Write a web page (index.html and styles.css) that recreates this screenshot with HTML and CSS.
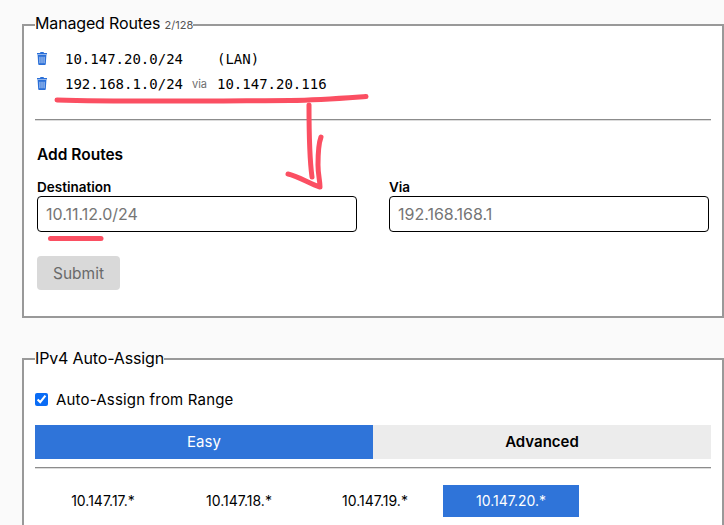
FILE: index.html
```html
<!DOCTYPE html>
<html lang="en">
<head>
<meta charset="utf-8">
<title>Managed Routes</title>
<link rel="stylesheet" href="styles.css">
</head>
<body>
<main class="page">
  <fieldset class="panel panel-routes">
    <legend class="panel-title">Managed Routes <span class="count">2/128</span></legend>
    <div class="routes">
      <svg class="trash" viewBox="0 0 10 13"><path d="M3.500 0h3l.5 1h3v1.400H0V1h3zM.6 3h8.800l-.6 9.100a.9.9 0 0 1-.9.9H2.100a.9.9 0 0 1-.9-.9zm2 1.800v6.400h.7V4.800zm2.050 0v6.400h.7V4.800zm2.050 0v6.400h.7V4.800z"/></svg>
      <span class="addr">10.147.20.0/24</span><span></span><span class="addr">(LAN)</span>
      <svg class="trash" viewBox="0 0 10 13"><path d="M3.500 0h3l.5 1h3v1.400H0V1h3zM.6 3h8.800l-.6 9.100a.9.9 0 0 1-.9.9H2.100a.9.9 0 0 1-.9-.9zm2 1.800v6.400h.7V4.800zm2.050 0v6.400h.7V4.800zm2.050 0v6.400h.7V4.800z"/></svg>
      <span class="addr">192.168.1.0/24</span><span class="via">via</span><span class="addr">10.147.20.116</span>
    </div>
    <hr class="rule">
    <h3 class="add-title">Add Routes</h3>
    <form class="add-form">
      <label class="field"><span class="field-label">Destination</span><input class="field-input" type="text" placeholder="10.11.12.0/24"></label>
      <label class="field"><span class="field-label">Via</span><input class="field-input" type="text" placeholder="192.168.168.1"></label>
    </form>
    <button class="submit" type="button">Submit</button>
  </fieldset>
  <fieldset class="panel panel-assign">
    <legend class="panel-title">IPv4 Auto-Assign</legend>
    <label class="check"><input class="check-box" type="checkbox" checked>Auto-Assign from Range</label>
    <div class="tabs"><div class="tab tab-on">Easy</div><div class="tab">Advanced</div></div>
    <hr class="rule rule-tabs">
    <div class="ranges">
      <div class="range">10.147.17.*</div>
      <div class="range">10.147.18.*</div>
      <div class="range">10.147.19.*</div>
      <div class="range range-on">10.147.20.*</div>
    </div>
  </fieldset>
</main>
<svg class="marks" viewBox="0 0 724 525" width="724" height="525">
  <path class="mark" d="M57 100C120 102 200 101 290 100.500C320 100 345 98 366 96.500"/>
  <path class="mark" d="M309 105C309 130 309 155 312 177"/>
  <path class="mark" d="M321 137C318 145 318 155 318 165C318 175 320 180 320 187C310 184 298 176 288 174"/>
  <path class="mark" d="M50.500 238.500H101"/>
</svg>
</body>
</html>
```
FILE: styles.css
```css
* { box-sizing: border-box; }
html, body { margin: 0; height: 525px; overflow: hidden; }
body { background: #fafafa; color: #000; font-family: Inter, "Liberation Sans", sans-serif; font-size: 16px; position: relative; }
.page { padding: 14px 0 0 22px; width: 724px; height: 525px; overflow: hidden; }
.panel { margin: 0; padding: 12px 11px 0; border: 2px solid #999; background: #fff; min-width: 0; width: 702px; }
.panel-routes { height: 304px; padding-top: 10px; }
.panel-assign { margin-top: 31px; height: 220px; }
.panel-title { padding: 0; font-size: 16px; line-height: 19px; font-weight: 400; letter-spacing: -0.15px; }
.count { font-size: 11px; color: #555; letter-spacing: 0; }
.routes { display: grid; grid-template-columns: 30px 118px 34px 1fr; grid-auto-rows: 25px; align-items: center; margin-top: 1px; }
.trash { width: 10px; height: 13px; margin-left: 2px; fill: #2a6fd8; }
.addr { font-family: "DejaVu Sans Mono", "Liberation Mono", monospace; font-size: 14px; }
.via { font-size: 11px; color: #6e6e6e; padding-left: 9px; }
.rule { margin: 0; border: 0; border-top: 1px solid #8c8c8c; box-shadow: 0 1px 0 #dcdcdc; }
.routes + .rule { margin-top: 23px; }
.add-title { margin: 26px 0 0 2px; font-size: 15.500px; line-height: 18px; font-weight: 600; }
.add-form { display: grid; grid-template-columns: 320px 320px; gap: 32px; margin: 15px 2px 0; }
.field { display: block; }
.field-label { display: block; font-size: 13.500px; line-height: 16px; font-weight: 600; margin-bottom: 1px; }
.field-input { display: block; width: 100%; height: 36px; padding: 0 8px; border: 1px solid #000; border-radius: 4px; background: #fff; font: 400 16px Inter, "Liberation Sans", sans-serif; }
.field-input::placeholder { color: #757575; opacity: 1; }
.submit { display: block; margin: 24px 0 0 2px; width: 83px; height: 34px; border: 0; border-radius: 4px; background: #d9d9d9; color: #6a6a6a; font: 400 15.500px Inter, "Liberation Sans", sans-serif; }
.check { display: flex; align-items: center; margin-top: 9px; height: 20px; font-size: 15px; letter-spacing: 0.18px; }
.check-box { width: 13px; height: 13px; margin: 0 8px 0 0; accent-color: #0a6cf5; }
.tabs { display: grid; grid-template-columns: 1fr 1fr; margin-top: 16px; }
.tab { height: 34px; line-height: 34px; text-align: center; background: #ececec; font-size: 15px; font-weight: 600; }
.tab-on { background: #2f74d9; color: #fff; font-weight: 400; }
.rule-tabs { margin-top: 8px; }
.ranges { display: grid; grid-template-columns: repeat(4, 136px); margin-top: 17px; }
.range { height: 32px; line-height: 32px; text-align: center; font-size: 14px; }
.range-on { background: #2f74d9; color: #fff; }
.marks { position: absolute; left: 0; top: 0; pointer-events: none; }
.mark { fill: none; stroke: #fb4f62; stroke-width: 5; stroke-linecap: round; stroke-linejoin: round; }
```
